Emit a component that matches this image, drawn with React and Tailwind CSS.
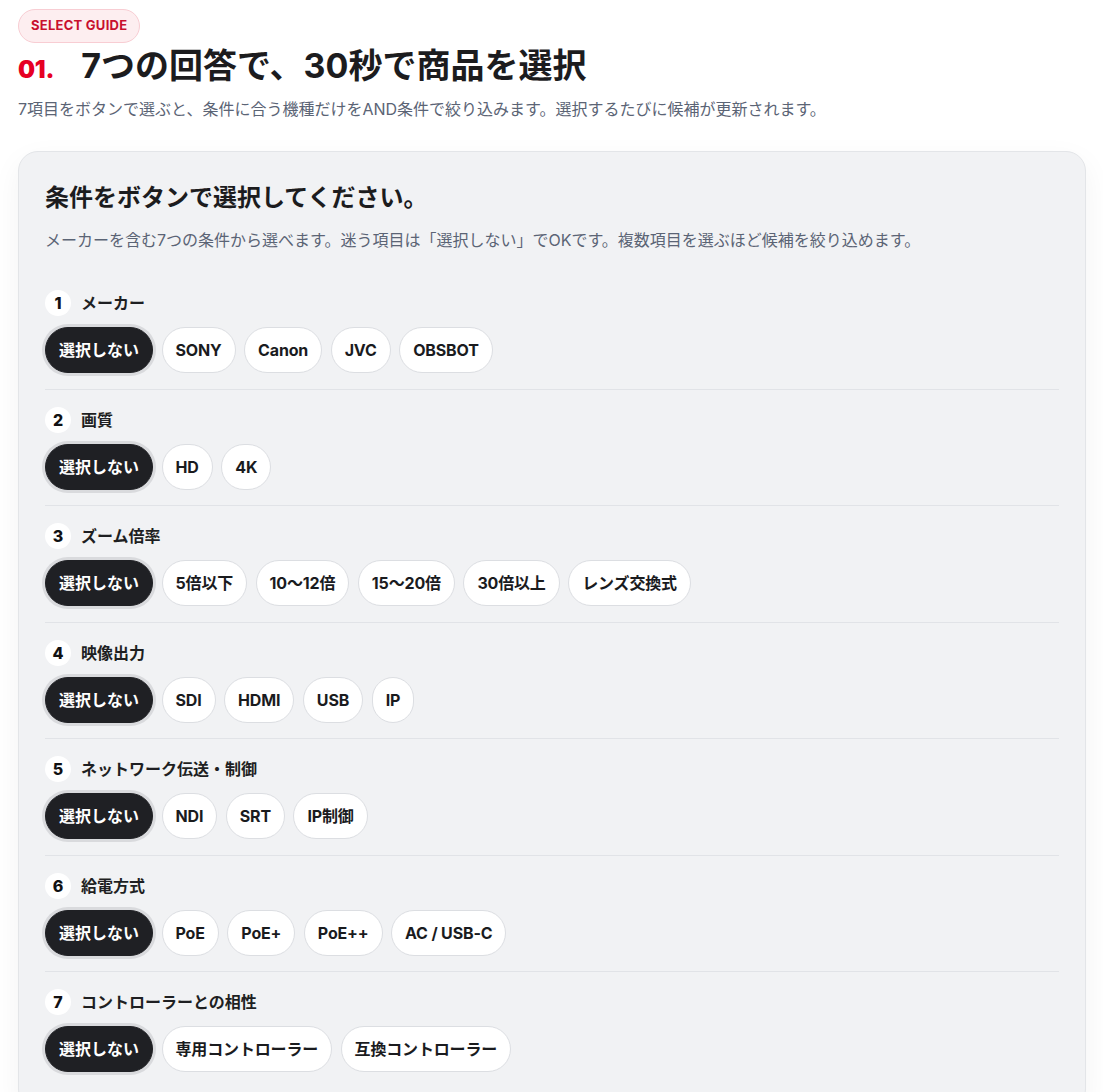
import React from "react";

const FONT = { fontFamily: 'Inter, "Noto Sans CJK JP", "Noto Sans", sans-serif' };

const SECTIONS = [
  { n: 1, label: "メーカー", options: ["SONY", "Canon", "JVC", "OBSBOT"] },
  { n: 2, label: "画質", options: ["HD", "4K"] },
  { n: 3, label: "ズーム倍率", options: ["5倍以下", "10〜12倍", "15〜20倍", "30倍以上", "レンズ交換式"] },
  { n: 4, label: "映像出力", options: ["SDI", "HDMI", "USB", "IP"] },
  { n: 5, label: "ネットワーク伝送・制御", options: ["NDI", "SRT", "IP制御"] },
  { n: 6, label: "給電方式", options: ["PoE", "PoE+", "PoE++", "AC / USB-C"] },
  { n: 7, label: "コントローラーとの相性", options: ["専用コントローラー", "互換コントローラー"] },
];

function Section({ n, label, options, last }) {
  return (
    <div className={`pt-[17px] pb-[15.5px] ${last ? "" : "border-b border-[#e1e3e7]"}`}>
      <div className="flex items-center h-[26px] gap-[10px]">
        <span className="w-[26px] h-[26px] rounded-full bg-white flex items-center justify-center text-[16px] font-extrabold text-[#111113]">
          {n}
        </span>
        <span className="text-[16px] font-bold text-[#1e1f22] leading-none">{label}</span>
      </div>
      <div className="mt-[11px] flex flex-wrap gap-[8.5px]">
        <button className="h-[46px] px-[13px] rounded-full bg-[#1f2024] border border-[#1f2024] text-white text-[16px] font-bold shadow-[0_0_0_3px_#d9dadd] leading-none">
          選択しない
        </button>
        {options.map((o) => (
          <button
            key={o}
            className="h-[46px] px-[13px] rounded-full bg-white border border-[#dcdee2] text-[#1a1b1e] text-[16px] font-bold tracking-[-0.01em] leading-none"
          >
            {o}
          </button>
        ))}
      </div>
    </div>
  );
}

export default function App() {
  return (
    <div className="min-h-[1092px] bg-white pl-[18px] pr-[17px] pt-[9px] pb-10" style={FONT}>
      <div className="inline-flex items-center h-[34px] px-[12px] rounded-full bg-[#fdeef0] border border-[#f8cdd3] text-[#c8102e] text-[13px] font-bold tracking-[0.02em]">
        SELECT GUIDE
      </div>
      <div className="mt-[1px] flex items-baseline h-[44px] leading-[44px]">
        <span className="text-[24px] font-black text-[#e60023] tracking-[-0.01em]">01.</span>
        <h1 className="ml-[27px] text-[34px] font-bold text-[#1c1c1e]">7つの回答で、30秒で商品を選択</h1>
      </div>
      <p className="mt-[9px] text-[16px] leading-[24px] text-[#5b6475]">
        7項目をボタンで選ぶと、条件に合う機種だけをAND条件で絞り込みます。選択するたびに候補が更新されます。
      </p>
      <div className="mt-[30px] rounded-[20px] border border-[#e3e5e8] bg-[#f1f2f4] shadow-[0_10px_30px_rgba(0,0,0,0.05)] px-[26px] pt-[30px] pb-[20px]">
        <h2 className="text-[24px] leading-[32px] font-bold text-[#1c1c1e]">条件をボタンで選択してください。</h2>
        <p className="mt-[14px] text-[16px] leading-[24px] text-[#5b6475]">
          メーカーを含む7つの条件から選べます。迷う項目は「選択しない」でOKです。複数項目を選ぶほど候補を絞り込めます。
        </p>
        <div className="mt-[21px]">
          {SECTIONS.map((s, i) => (
            <Section key={s.n} {...s} last={i === SECTIONS.length - 1} />
          ))}
        </div>
      </div>
    </div>
  );
}
